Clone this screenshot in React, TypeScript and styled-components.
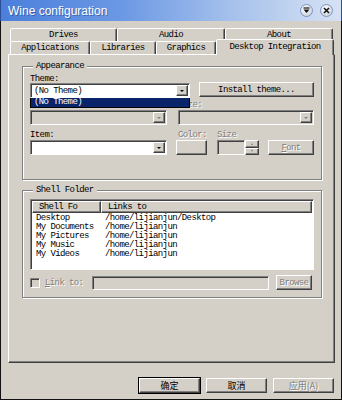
import styled, { createGlobalStyle, css } from 'styled-components';

const face = '#d4d0c8';
const shadow = '#808080';
const dark = '#404040';
const mono = `"Liberation Mono", "DejaVu Sans Mono", monospace`;
const cjk = `"Noto Sans CJK SC", "Liberation Sans", sans-serif`;

const backTabs = [
  { label: 'Drives', w: 107 },
  { label: 'Audio', w: 108 },
  { label: 'About', w: 108 },
];

const frontTabs = [
  { label: 'Applications', w: 80 },
  { label: 'Libraries', w: 66 },
  { label: 'Graphics', w: 60 },
  { label: 'Desktop Integration', w: 118, active: true },
];

const folders = [
  { name: 'Desktop', link: '/home/lijianjun/Desktop' },
  { name: 'My Documents', link: '/home/lijianjun' },
  { name: 'My Pictures', link: '/home/lijianjun' },
  { name: 'My Music', link: '/home/lijianjun' },
  { name: 'My Videos', link: '/home/lijianjun' },
];

const GlobalStyle = createGlobalStyle`
  html, body { margin: 0; padding: 0; background: ${face}; }
  * { box-sizing: border-box; }
`;

const raised = css`
  border: 1px solid;
  border-color: #fff ${dark} ${dark} #fff;
  box-shadow: inset -1px -1px ${shadow};
`;

const sunken = css`
  border: 1px solid;
  border-color: ${shadow} #fff #fff ${shadow};
  box-shadow: inset 1px 1px ${dark};
`;

const disabledText = css`
  color: ${shadow};
  text-shadow: 1px 1px #fff;
`;

export default function App() {
  return (
    <>
      <GlobalStyle />
      <Window>
        <TitleBar>
          <Title>Wine configuration</Title>
          <TitleButtons>
            <RoundButton>
              <svg width="13" height="13" viewBox="0 0 13 13">
                <circle cx="6.5" cy="6.5" r="6" fill="url(#knob)" stroke="#7d93c4" />
                <defs>
                  <radialGradient id="knob" cx="0.4" cy="0.35" r="0.7">
                    <stop offset="0" stopColor="#ffffff" />
                    <stop offset="1" stopColor="#c9cfdc" />
                  </radialGradient>
                </defs>
                <path d="M3.5 4H9.5" stroke="#111" strokeWidth="1.2" />
                <path d="M3.5 5.6H9.5L6.5 9Z" fill="#111" />
              </svg>
            </RoundButton>
            <RoundButton>
              <svg width="13" height="13" viewBox="0 0 13 13">
                <circle cx="6.5" cy="6.5" r="6" fill="url(#knob)" stroke="#7d93c4" />
                <path d="M4 4L9 9M9 4L4 9" stroke="#111" strokeWidth="1.6" />
              </svg>
            </RoundButton>
          </TitleButtons>
        </TitleBar>

        <Client>
          <TabRows>
            <TabRow>
              {backTabs.map((t) => (
                <Tab key={t.label} $w={t.w}>{t.label}</Tab>
              ))}
            </TabRow>
            <TabRow>
              {frontTabs.map((t) => (
                <Tab key={t.label} $w={t.w} $active={t.active}>{t.label}</Tab>
              ))}
            </TabRow>
          </TabRows>

          <Panel>
            <Group $h={119}>
              <Legend>Appearance</Legend>
              <Label>Theme:</Label>
              <ThemeRow>
                <ComboBox $w={160}>
                  <ComboText>(No Theme)</ComboText>
                  <DropButton />
                </ComboBox>
                <PushButton $w={115} $top={-1}>Install theme...</PushButton>
                <DropList>(No Theme)</DropList>
              </ThemeRow>

              <LabelRow $top={2} $h={10}>
                <Label $w={148} $disabled>Color:</Label>
                <Label $disabled>Size:</Label>
              </LabelRow>
              <Row>
                <ComboBox $w={137} $disabled>
                  <ComboText />
                  <DropButton $disabled />
                </ComboBox>
                <ComboBox $w={136} $disabled>
                  <ComboText />
                  <DropButton $disabled />
                </ComboBox>
              </Row>

              <LabelRow $top={4} $h={11}>
                <Label $w={148}>Item:</Label>
                <Label $w={39} $disabled>Color:</Label>
                <Label $disabled>Size</Label>
              </LabelRow>
              <Row>
                <ComboBox $w={137}>
                  <ComboText />
                  <DropButton />
                </ComboBox>
                <PushButton $w={31} disabled />
                <SpinBox>
                  <SpinEdit />
                  <SpinButtons>
                    <SpinButton />
                    <SpinButton $down />
                  </SpinButtons>
                </SpinBox>
                <PushButton $w={46} disabled>
                  <u>F</u>ont
                </PushButton>
              </Row>
            </Group>

            <Group $h={113} $gap={5}>
              <Legend>Shell Folder</Legend>
              <ListView>
                <ListHeader>
                  <HeaderCell $w={69}>Shell Fo</HeaderCell>
                  <HeaderCell>Links to</HeaderCell>
                </ListHeader>
                {folders.map((f) => (
                  <ListRow key={f.name}>
                    <Cell $w={69}>{f.name}</Cell>
                    <Cell>{f.link}</Cell>
                  </ListRow>
                ))}
              </ListView>
              <LinkRow>
                <CheckBox />
                <Label $w={47} $disabled>
                  <u>L</u>ink to:
                </Label>
                <Edit $w={177} />
                <PushButton $w={36} disabled>
                  Browse
                </PushButton>
              </LinkRow>
            </Group>
          </Panel>

          <ButtonBar>
            <DialogButton $default>确定</DialogButton>
            <DialogButton>取消</DialogButton>
            <DialogButton disabled>应用(A)</DialogButton>
          </ButtonBar>
        </Client>
      </Window>
    </>
  );
}

/* Styled Components */

const Window = styled.div`
  width: 342px;
  height: 400px;
  display: flex;
  flex-direction: column;
  background: ${face};
  border: 1px solid #111;
  border-top: none;
  font-family: ${mono};
  font-size: 9px;
  letter-spacing: -0.6px;
  color: #000;
`;

const TitleBar = styled.div`
  height: 21px;
  margin: 0 -1px;
  padding: 0 8px 0 7px;
  display: flex;
  align-items: center;
  justify-content: space-between;
  background: linear-gradient(90deg, #4b7fdb 0%, #6b98e4 35%, #a9c3ec 70%, #d6e2f3 100%);
  border-left: 1px solid #2c4f94;
  border-right: 1px solid #2c4f94;
`;

const Title = styled.span`
  font-family: "Liberation Sans", Arial, sans-serif;
  font-size: 12px;
  letter-spacing: 0;
  color: #fff;
  text-shadow: 1px 1px rgba(20, 40, 110, 0.45);
`;

const TitleButtons = styled.div`
  display: flex;
  gap: 7px;
`;

const RoundButton = styled.span`
  display: flex;
  width: 13px;
  height: 13px;
`;

const Client = styled.div`
  flex: 1;
  display: flex;
  flex-direction: column;
  padding: 7px 6px 6px 7px;
`;

const TabRows = styled.div`
  display: flex;
  flex-direction: column;
  padding-left: 2px;
`;

const TabRow = styled.div`
  display: flex;
  height: 13px;
  align-items: flex-end;
`;

const Tab = styled.div<{ $w: number; $active?: boolean }>`
  width: ${(p) => p.$w}px;
  height: ${(p) => (p.$active ? 16 : 13)}px;
  margin-bottom: ${(p) => (p.$active ? -1 : 0)}px;
  position: relative;
  z-index: ${(p) => (p.$active ? 1 : 0)};
  display: flex;
  align-items: center;
  justify-content: center;
  padding-bottom: ${(p) => (p.$active ? 2 : 0)}px;
  background: ${face};
  border: 1px solid;
  border-bottom: none;
  border-color: #fff ${dark} transparent #fff;
  border-radius: 2px 2px 0 0;
  box-shadow: inset -1px 0 ${shadow};
  white-space: nowrap;
`;

const Panel = styled.div`
  height: 309px;
  width: 327px;
  padding: 6px 12px 0 13px;
  display: flex;
  flex-direction: column;
  border: 1px solid;
  border-color: #fff ${dark} ${dark} #fff;
  box-shadow: inset -1px -1px ${shadow};
`;

const Group = styled.fieldset<{ $h: number; $gap?: number }>`
  margin: ${(p) => p.$gap ?? 0}px 0 0;
  height: ${(p) => p.$h}px;
  padding: 3px 7px 0;
  display: flex;
  flex-direction: column;
  border: 1px solid ${shadow};
  box-shadow: inset 1px 1px #fff, 1px 1px #fff;
  min-width: 0;
`;

const Legend = styled.legend`
  margin-left: 3px;
  padding: 0 3px;
  line-height: 11px;
  background: ${face};
`;

const Label = styled.span<{ $w?: number; $disabled?: boolean }>`
  display: block;
  line-height: 8px;
  white-space: nowrap;
  ${(p) => p.$w && `width: ${p.$w}px; flex: none;`}
  ${(p) => p.$disabled && disabledText}
`;

const LabelRow = styled.div<{ $top: number; $h: number }>`
  display: flex;
  align-items: center;
  margin-top: ${(p) => p.$top}px;
  height: ${(p) => p.$h}px;
`;

const Row = styled.div`
  display: flex;
  align-items: flex-start;
  justify-content: space-between;
`;

const ThemeRow = styled(Row)`
  position: relative;
`;

const ComboBox = styled.div<{ $w: number; $disabled?: boolean }>`
  width: ${(p) => p.$w}px;
  height: 15px;
  flex: none;
  display: flex;
  align-items: center;
  padding: 0 1px 0 3px;
  background: ${(p) => (p.$disabled ? face : '#fff')};
  ${sunken}
`;

const ComboText = styled.span`
  flex: 1;
  white-space: nowrap;
`;

const DropButton = styled.span<{ $disabled?: boolean }>`
  width: 12px;
  height: 11px;
  display: flex;
  align-items: center;
  justify-content: center;
  background: ${face};
  ${raised}

  &::after {
    content: '';
    border-left: 2px solid transparent;
    border-right: 2px solid transparent;
    border-top: 2px solid ${(p) => (p.$disabled ? shadow : '#000')};
  }
`;

const DropList = styled.div`
  position: absolute;
  left: 0;
  top: 15px;
  width: 160px;
  height: 10px;
  padding-left: 3px;
  line-height: 9px;
  color: #fff;
  background: #0a246a;
  border: 1px solid #000;
  border-top: none;
  z-index: 2;
`;

const PushButton = styled.button<{ $w: number; $top?: number }>`
  width: ${(p) => p.$w}px;
  height: 15px;
  flex: none;
  margin: ${(p) => p.$top ?? 0}px 0 0;
  padding: 0;
  font: inherit;
  letter-spacing: inherit;
  color: #000;
  background: ${face};
  ${raised}

  &:disabled {
    ${disabledText}
  }
`;

const SpinBox = styled.div`
  width: 42px;
  height: 15px;
  display: flex;
`;

const SpinEdit = styled.div`
  flex: 1;
  background: ${face};
  ${sunken}
`;

const SpinButtons = styled.div`
  width: 14px;
  display: flex;
  flex-direction: column;
`;

const SpinButton = styled.span<{ $down?: boolean }>`
  flex: 1;
  display: flex;
  align-items: center;
  justify-content: center;
  background: ${face};
  ${raised}

  &::after {
    content: '';
    border-left: 1.5px solid transparent;
    border-right: 1.5px solid transparent;
    ${(p) => (p.$down ? 'border-top' : 'border-bottom')}: 2px solid ${shadow};
  }
`;

const ListView = styled.div`
  height: 71px;
  display: flex;
  flex-direction: column;
  padding: 1px;
  background: #fff;
  ${sunken}
`;

const ListHeader = styled.div`
  display: flex;
  height: 12px;
  margin-bottom: 1px;
`;

const HeaderCell = styled.div<{ $w?: number }>`
  ${(p) => (p.$w ? `width: ${p.$w}px;` : 'flex: 1;')}
  padding-left: 6px;
  line-height: 10px;
  background: ${face};
  ${raised}
`;

const ListRow = styled.div`
  display: flex;
  height: 9px;
  line-height: 9px;
`;

const Cell = styled.span<{ $w?: number }>`
  ${(p) => (p.$w ? `width: ${p.$w}px;` : 'flex: 1;')}
  padding-left: 4px;
  white-space: nowrap;
`;

const LinkRow = styled.div`
  display: flex;
  align-items: center;
  margin-top: 5px;
  height: 15px;
`;

const CheckBox = styled.span`
  width: 10px;
  height: 10px;
  margin-right: 5px;
  background: ${face};
  ${sunken}
`;

const Edit = styled.div<{ $w: number }>`
  width: ${(p) => p.$w}px;
  height: 14px;
  margin-right: 7px;
  background: ${face};
  ${sunken}
`;

const ButtonBar = styled.div`
  display: flex;
  justify-content: flex-end;
  gap: 6px;
  margin-top: 15px;
  padding-right: 1px;
`;

const DialogButton = styled.button<{ $default?: boolean }>`
  width: 61px;
  height: 15px;
  padding: 0;
  font-family: ${cjk};
  font-size: 9px;
  line-height: 11px;
  color: #000;
  background: ${face};
  ${raised}
  ${(p) => p.$default && `outline: 1px solid #000; outline-offset: 0; border-color: #fff ${dark} ${dark} #fff;`}

  &:disabled {
    ${disabledText}
  }
`;
